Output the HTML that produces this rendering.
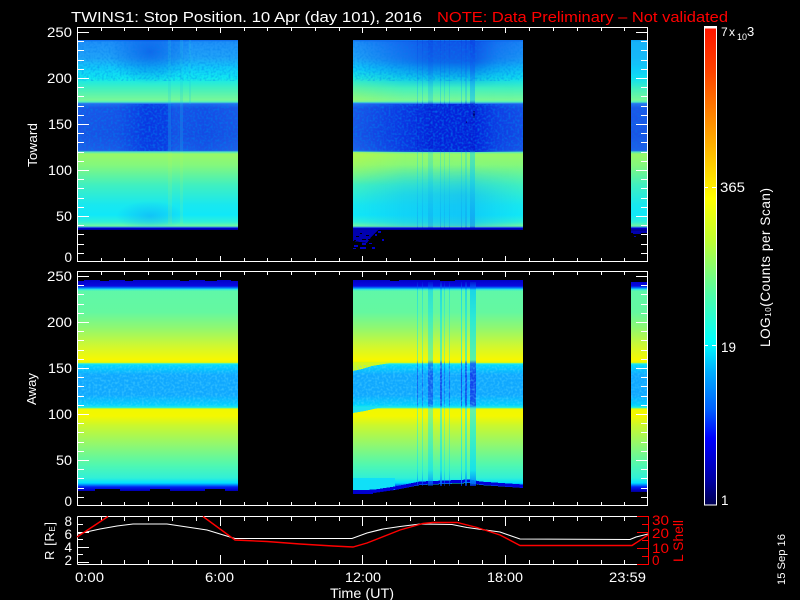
<!DOCTYPE html>
<html><head><meta charset="utf-8"><title>TWINS1 Stop Position</title>
<style>
html,body{margin:0;padding:0;background:#000;width:800px;height:600px;overflow:hidden}
svg{display:block}
text{font-family:"Liberation Sans",sans-serif;fill:#fff}
</style></head><body>
<svg width="800" height="600" viewBox="0 0 800 600" xmlns="http://www.w3.org/2000/svg">
<defs>
<linearGradient id="p1" gradientUnits="userSpaceOnUse" x1="0" y1="0" x2="0" y2="1000">
<stop offset=".040" stop-color="#0c68ec"/><stop offset=".042" stop-color="#2090f8"/><stop offset=".058" stop-color="#20a4f8"/><stop offset=".068" stop-color="#10ccfa"/><stop offset=".078" stop-color="#10e8f0"/><stop offset=".088" stop-color="#40f0c0"/><stop offset=".100" stop-color="#78f898"/><stop offset=".102" stop-color="#50f0c0"/><stop offset=".1035" stop-color="#2878f0"/><stop offset=".108" stop-color="#1c58e8"/><stop offset=".135" stop-color="#1a54e4"/><stop offset=".1505" stop-color="#2060e8"/><stop offset=".152" stop-color="#50e8c0"/><stop offset=".154" stop-color="#98f868"/><stop offset=".165" stop-color="#84f87c"/><stop offset=".185" stop-color="#40f0c0"/><stop offset=".205" stop-color="#18e8f0"/><stop offset=".215" stop-color="#10e8f8"/><stop offset=".222" stop-color="#30f0d8"/><stop offset=".226" stop-color="#70f8a0"/><stop offset=".2275" stop-color="#2060f0"/><stop offset=".228" stop-color="#0000d0"/><stop offset=".230" stop-color="#000090"/>
</linearGradient>
<linearGradient id="p1s" gradientUnits="userSpaceOnUse" x1="0" y1="0" x2="0" y2="1000">
<stop offset=".040" stop-color="#0838e0"/><stop offset=".070" stop-color="#1060f0"/><stop offset=".085" stop-color="#10a0f8"/><stop offset=".100" stop-color="#10c0f8"/><stop offset=".104" stop-color="#0818d0"/><stop offset=".150" stop-color="#0818d0"/><stop offset=".153" stop-color="#20d8e0"/><stop offset=".180" stop-color="#10c8f0"/><stop offset=".226" stop-color="#1088f0"/><stop offset=".228" stop-color="#0000d0"/>
</linearGradient>
<linearGradient id="p2" gradientUnits="userSpaceOnUse" x1="0" y1="0" x2="0" y2="1000">
<stop offset=".280" stop-color="#0000c8"/><stop offset=".286" stop-color="#0808e0"/><stop offset=".288" stop-color="#0080ff"/><stop offset=".2895" stop-color="#30e8e0"/><stop offset=".291" stop-color="#60f8a8"/><stop offset=".312" stop-color="#64f8a0"/><stop offset=".328" stop-color="#90f870"/><stop offset=".346" stop-color="#d0f830"/><stop offset=".360" stop-color="#f8f800"/><stop offset=".3625" stop-color="#e8f800"/><stop offset=".3635" stop-color="#40f0d0"/><stop offset=".365" stop-color="#00d8ff"/><stop offset=".375" stop-color="#10a8ff"/><stop offset=".395" stop-color="#10a8ff"/><stop offset=".405" stop-color="#00d0ff"/><stop offset=".4075" stop-color="#20f0e0"/><stop offset=".409" stop-color="#f0f800"/><stop offset=".416" stop-color="#f4f800"/><stop offset=".426" stop-color="#c8f830"/><stop offset=".445" stop-color="#90f870"/><stop offset=".465" stop-color="#50f8b0"/><stop offset=".478" stop-color="#30f0d8"/><stop offset=".483" stop-color="#00e0ff"/><stop offset=".485" stop-color="#0080ff"/><stop offset=".487" stop-color="#0020f0"/><stop offset=".490" stop-color="#0000c8"/><stop offset=".492" stop-color="#000090"/>
</linearGradient>
<linearGradient id="p2s" gradientUnits="userSpaceOnUse" x1="0" y1="0" x2="0" y2="1000">
<stop offset=".280" stop-color="#0000c0"/><stop offset=".288" stop-color="#0060ff"/><stop offset=".290" stop-color="#10d0f0"/><stop offset=".320" stop-color="#20e8e0"/><stop offset=".360" stop-color="#40f0c0"/><stop offset=".3635" stop-color="#1060f8"/><stop offset=".375" stop-color="#1030e8"/><stop offset=".405" stop-color="#1040e8"/><stop offset=".4075" stop-color="#20d0f0"/><stop offset=".409" stop-color="#50f0c0"/><stop offset=".430" stop-color="#30f0d0"/><stop offset=".470" stop-color="#10e0f0"/><stop offset=".483" stop-color="#0080ff"/><stop offset=".487" stop-color="#0000d0"/><stop offset=".492" stop-color="#000090"/>
</linearGradient>
<linearGradient id="h1" gradientUnits="userSpaceOnUse" x1="78" y1="0" x2="238" y2="0">
<stop offset="0" stop-color="#0030e0" stop-opacity="0"/><stop offset=".25" stop-color="#0030e0" stop-opacity=".15"/><stop offset=".42" stop-color="#0028e0" stop-opacity=".65"/><stop offset=".55" stop-color="#0028e0" stop-opacity=".6"/><stop offset=".6" stop-color="#0030e0" stop-opacity=".1"/><stop offset=".8" stop-color="#0030e0" stop-opacity=".25"/><stop offset="1" stop-color="#0030e0" stop-opacity="0"/>
</linearGradient>
<linearGradient id="h2" gradientUnits="userSpaceOnUse" x1="353" y1="0" x2="523" y2="0">
<stop offset="0" stop-color="#0020e0" stop-opacity="0"/><stop offset=".25" stop-color="#0020e0" stop-opacity=".5"/><stop offset=".45" stop-color="#0018d8" stop-opacity=".8"/><stop offset=".72" stop-color="#0018d8" stop-opacity=".85"/><stop offset=".85" stop-color="#0020e0" stop-opacity=".45"/><stop offset="1" stop-color="#0020e0" stop-opacity=".2"/>
</linearGradient>
<linearGradient id="hy" gradientUnits="userSpaceOnUse" x1="353" y1="0" x2="523" y2="0">
<stop offset="0" stop-color="#c0f840" stop-opacity=".65"/><stop offset=".3" stop-color="#c0f840" stop-opacity=".05"/><stop offset="1" stop-color="#c0f840" stop-opacity="0"/>
</linearGradient>
<linearGradient id="hc" gradientUnits="userSpaceOnUse" x1="353" y1="0" x2="523" y2="0">
<stop offset="0" stop-color="#10c0f8" stop-opacity="0"/><stop offset=".3" stop-color="#10c0f8" stop-opacity=".5"/><stop offset=".65" stop-color="#10b0f8" stop-opacity=".6"/><stop offset="1" stop-color="#10c0f8" stop-opacity="0"/>
</linearGradient>
<radialGradient id="blobD"><stop offset="0" stop-color="#0040e0" stop-opacity=".55"/><stop offset="1" stop-color="#0040e0" stop-opacity="0"/></radialGradient>
<radialGradient id="blobL"><stop offset="0" stop-color="#10a0f8" stop-opacity=".5"/><stop offset="1" stop-color="#10a0f8" stop-opacity="0"/></radialGradient>
<linearGradient id="fa" gradientUnits="userSpaceOnUse" x1="0" y1="0" x2="0" y2="1000"><stop offset=".041" stop-color="#fff"/><stop offset=".062" stop-color="#fff"/><stop offset=".088" stop-color="#000"/></linearGradient>
<linearGradient id="fb" gradientUnits="userSpaceOnUse" x1="0" y1="0" x2="0" y2="1000"><stop offset=".165" stop-color="#000"/><stop offset=".195" stop-color="#fff"/><stop offset=".226" stop-color="#fff"/></linearGradient>
<linearGradient id="fc" gradientUnits="userSpaceOnUse" x1="0" y1="0" x2="0" y2="1000"><stop offset=".152" stop-color="#fff"/><stop offset=".185" stop-color="#000"/></linearGradient>
<linearGradient id="fd" gradientUnits="userSpaceOnUse" x1="0" y1="0" x2="0" y2="1000"><stop offset=".070" stop-color="#000"/><stop offset=".098" stop-color="#fff"/></linearGradient>
<mask id="ma" maskUnits="userSpaceOnUse" x="0" y="0" width="800" height="600"><rect width="800" height="600" fill="url(#fa)"/></mask>
<mask id="mb" maskUnits="userSpaceOnUse" x="0" y="0" width="800" height="600"><rect width="800" height="600" fill="url(#fb)"/></mask>
<mask id="mc" maskUnits="userSpaceOnUse" x="0" y="0" width="800" height="600"><rect width="800" height="600" fill="url(#fc)"/></mask>
<mask id="md" maskUnits="userSpaceOnUse" x="0" y="0" width="800" height="600"><rect width="800" height="600" fill="url(#fd)"/></mask>
<clipPath id="c1"><rect x="78" y="40" width="160" height="188"/></clipPath>
<linearGradient id="cb" x1="0" y1="0" x2="0" y2="1">
<stop offset="0" stop-color="#ff1400"/><stop offset=".09" stop-color="#ff4000"/><stop offset=".18" stop-color="#ff8000"/><stop offset=".27" stop-color="#ffc000"/><stop offset=".36" stop-color="#ffff00"/><stop offset=".445" stop-color="#c0ff30"/><stop offset=".56" stop-color="#50ffa8"/><stop offset=".66" stop-color="#00ffff"/><stop offset=".72" stop-color="#00b0ff"/><stop offset=".80" stop-color="#0060ff"/><stop offset=".86" stop-color="#0000ff"/><stop offset=".95" stop-color="#0000a0"/><stop offset="1" stop-color="#000050"/>
</linearGradient>
<filter id="n" x="0" y="0" width="100%" height="100%"><feTurbulence type="fractalNoise" baseFrequency=".45" numOctaves="1" seed="4"/><feColorMatrix values="0 0 0 0 0  0 0 0 0 .2  0 0 0 0 .85  2.6 0 0 0 -1.1"/></filter>
<filter id="m" x="0" y="0" width="100%" height="100%"><feTurbulence type="fractalNoise" baseFrequency=".45" numOctaves="1" seed="9"/><feColorMatrix values="0 0 0 0 .1  0 0 0 0 .7  0 0 0 0 1  2.6 0 0 0 -1.1"/></filter>
<path id="xs1" d="M101 0v3M124 0v3M148 0v3M172 0v3M196 0v3M244 0v3M267 0v3M291 0v3M315 0v3M339 0v3M386 0v3M410 0v3M434 0v3M458 0v3M482 0v3M529 0v3M553 0v3M577 0v3M601 0v3M624 0v3M220 0v5M362 0v5M505 0v5"/>
<path id="xs3" d="M101 0v4M124 0v4M148 0v4M172 0v4M196 0v4M244 0v4M267 0v4M291 0v4M315 0v4M339 0v4M386 0v4M410 0v4M434 0v4M458 0v4M482 0v4M529 0v4M553 0v4M577 0v4M601 0v4M624 0v4M220 0v9M362 0v9M505 0v9"/>
<path id="ys" d="M77 32.5h12M77 78.5h12M77 124.5h12M77 170.5h12M77 216.5h12M77 41.5h7M77 50.5h7M77 60.5h7M77 69.5h7M77 87.5h7M77 96.5h7M77 106.5h7M77 115.5h7M77 133.5h7M77 142.5h7M77 152.5h7M77 161.5h7M77 179.5h7M77 188.5h7M77 198.5h7M77 207.5h7M77 225.5h7M77 234.5h7M77 244.5h7M77 253.5h7"/>
</defs>

<rect width="800" height="600" fill="#000"/>

<!-- Panel 1 data -->
<g shape-rendering="crispEdges">
<rect x="78" y="40" width="160" height="190" fill="url(#p1)"/>
<rect x="353" y="40" width="170" height="190" fill="url(#p1)"/>
<rect x="631" y="40" width="17" height="191" fill="url(#p1)"/>
<g mask="url(#ma)"><rect x="631" y="40" width="17" height="50" fill="#10c8f8" opacity=".6"/></g>
<!-- blobs -->
<g clip-path="url(#c1)">
<ellipse cx="150" cy="52" rx="42" ry="32" fill="url(#blobD)"/>
<ellipse cx="150" cy="216" rx="34" ry="15" fill="url(#blobL)"/>
</g>
<rect x="78" y="104" width="160" height="47" fill="url(#h1)"/>
<g mask="url(#ma)"><rect x="353" y="41" width="170" height="50" fill="url(#h2)" opacity=".6"/></g>
<rect x="353" y="104" width="170" height="48" fill="url(#h2)"/>
<g mask="url(#mb)"><rect x="353" y="160" width="170" height="66" fill="url(#hc)"/></g>
<g mask="url(#mc)"><rect x="353" y="152" width="170" height="34" fill="url(#hy)"/></g>
<g mask="url(#md)"><rect x="353" y="70" width="170" height="32" fill="url(#hy)" opacity=".5"/></g>
<!-- lighter stripes block 1 -->
<g fill="#20c8e8" opacity=".22"><rect x="168" y="40" width="3" height="64"/><rect x="180" y="40" width="3" height="64"/><rect x="189" y="40" width="2" height="64"/><rect x="168" y="104" width="3" height="47"/><rect x="180" y="104" width="3" height="47"/></g>
<g fill="#c0f850" opacity=".12"><rect x="168" y="152" width="4" height="72"/><rect x="180" y="152" width="3" height="72"/></g>
<!-- dark stripes block 2 -->
<g fill="url(#p1s)"><rect x="417" y="40" width="1" height="188" opacity=".35"/><rect x="422" y="40" width="1" height="188" opacity=".3"/><rect x="428" y="40" width="5" height="188" opacity=".3"/><rect x="440" y="40" width="1" height="188" opacity=".35"/><rect x="444" y="40" width="1" height="188" opacity=".3"/><rect x="449" y="40" width="1" height="188" opacity=".3"/><rect x="461" y="40" width="1" height="188" opacity=".35"/><rect x="465" y="40" width="2" height="188" opacity=".35"/><rect x="470" y="40" width="5" height="188" opacity=".55"/></g>
<rect x="473" y="111" width="2" height="7" fill="#000080"/>
<rect x="466" y="121" width="1" height="2" fill="#000080"/>
<!-- panel 1 bottom speckle -->
<polygon points="353,229 379,229 372,236 367,243 353,241" fill="#0000b0"/>
<g fill="#0000c8"><rect x="378" y="231" width="3" height="2"/><rect x="375" y="234" width="2" height="2"/><rect x="382" y="239" width="2" height="2"/><rect x="362" y="243" width="4" height="2"/><rect x="354" y="245" width="4" height="2"/><rect x="360" y="247" width="6" height="2"/><rect x="372" y="247" width="3" height="2"/><rect x="369" y="243" width="3" height="1"/><rect x="353" y="248" width="3" height="1"/></g>
<g fill="#000"><rect x="356" y="236" width="3" height="1"/><rect x="362" y="239" width="4" height="1"/><rect x="366" y="235" width="3" height="1"/><rect x="354" y="240" width="2" height="1"/><rect x="368" y="239" width="3" height="1"/><rect x="360" y="233" width="2" height="1"/></g>
<g fill="#0000b0"><rect x="631" y="231" width="17" height="2"/><rect x="633" y="233" width="8" height="1"/><rect x="634" y="236" width="2" height="1"/></g>
<!-- noise -->
<rect x="78" y="41" width="160" height="40" filter="url(#n)" opacity=".45"/>
<rect x="78" y="104" width="160" height="47" filter="url(#n)" opacity=".7"/>
<rect x="353" y="41" width="170" height="40" filter="url(#n)" opacity=".45"/>
<rect x="353" y="104" width="170" height="47" filter="url(#n)" opacity=".7"/>
<rect x="631" y="104" width="17" height="47" filter="url(#n)" opacity=".5"/>

<!-- Panel 2 data -->
<rect x="78" y="280" width="160" height="211" fill="url(#p2)"/>
<polygon points="353,280 523,280 523,488 480,485 470,483 420,485 395,490 375,493 353,494" fill="url(#p2)"/>
<rect x="631" y="282" width="17" height="210" fill="url(#p2)"/>
<!-- block 2 left band lag -->
<polygon points="353,363 353,371 362,369 372,366 390,363" fill="#d0f820"/>
<polygon points="353,407 353,413 365,411 378,408 390,407" fill="#20e0f0"/>
<rect x="353" y="478" width="42" height="12" fill="#10e0f8"/>
<polyline points="353,492 375,491 395,488 420,483 470,481 480,483 523,486" fill="none" stroke="#0000d8" stroke-width="3"/>
<rect x="353" y="491" width="20" height="3" fill="#0000d0"/>
<!-- irregular top and bottom edges -->
<g fill="#000"><rect x="78" y="280" width="6" height="1"/><rect x="100" y="280" width="9" height="1"/><rect x="125" y="280" width="8" height="1"/><rect x="180" y="280" width="9" height="1"/><rect x="205" y="280" width="12" height="1"/><rect x="231" y="280" width="7" height="1"/><rect x="95" y="489" width="25" height="2"/><rect x="150" y="489" width="20" height="2"/><rect x="205" y="489" width="20" height="2"/><rect x="390" y="280" width="9" height="1"/><rect x="440" y="280" width="15" height="1"/></g>
<!-- stripes block 2 -->
<g fill="url(#p2s)"><rect x="417" y="282" width="1" height="204" opacity=".6"/><rect x="422" y="282" width="1" height="204" opacity=".5"/><rect x="428" y="282" width="5" height="204" opacity=".6"/><rect x="440" y="282" width="2" height="204" opacity=".75"/><rect x="444" y="282" width="1" height="204" opacity=".5"/><rect x="449" y="282" width="1" height="204" opacity=".5"/><rect x="461" y="282" width="1" height="204" opacity=".8"/><rect x="465" y="282" width="2" height="204" opacity=".75"/><rect x="470" y="282" width="6" height="204" opacity=".85"/></g>
<rect x="78" y="365" width="160" height="41" filter="url(#m)" opacity=".5"/>
<rect x="353" y="365" width="170" height="41" filter="url(#m)" opacity=".5"/>
<rect x="631" y="365" width="17" height="41" filter="url(#m)" opacity=".4"/>
</g>

<!-- Axes -->
<g fill="none" stroke="#fff" stroke-width="1" shape-rendering="crispEdges">
<rect x="77.5" y="27.5" width="570" height="234"/>
<rect x="77.5" y="271.5" width="570" height="234"/>
<path d="M77.5 516.5H637M77.5 564.5H648M77.5 516.5V564.5"/>
<use href="#xs1" transform="translate(.5,28)"/>
<use href="#xs1" transform="translate(.5,261) scale(1,-1)"/>
<use href="#xs1" transform="translate(.5,272)"/>
<use href="#xs1" transform="translate(.5,505) scale(1,-1)"/>
<use href="#xs3" transform="translate(.5,517)"/>
<use href="#xs3" transform="translate(.5,564) scale(1,-1)"/>
<use href="#ys"/>
<use href="#ys" transform="translate(725,0) scale(-1,1)"/>
<use href="#ys" transform="translate(0,244)"/>
<use href="#ys" transform="translate(725,244) scale(-1,1)"/>
<path d="M77 532.5h12M77 547.5h12M77 562.5h12M77 524.5h6M77 539.5h6M77 554.5h6"/>
</g>
<g fill="none" stroke="#f00" stroke-width="1" shape-rendering="crispEdges">
<path d="M648.5 516V565M637 516.5h11M637 532.5h11M637 548.5h11M637 564.5h11M642 524.5h6M642 540.5h6M642 556.5h6"/>
</g>

<!-- Curves -->
<polyline fill="none" stroke="#fff" stroke-width="1.1" points="77,534 100,529 117,526 133,524 167,524 187,527 207,530 230,537 235,538.5 352,538.5 367,533 383,529 400,526.5 420,524 452,524.5 467,527.5 500,532 520,539 630,539.5 636,537 648,534"/>
<polyline fill="none" stroke="#f00" stroke-width="1.4" points="77,537 108,516.5"/>
<polyline fill="none" stroke="#f00" stroke-width="1.4" points="203,516.5 235,540 267,541.5 300,544 333,546 353,547 367,543 400,530 423,523.5 433,522.5 457,522.5 477,527.5 500,535 520,545.5 632,545.5 648,535"/>

<!-- Colour bar -->
<rect x="704.5" y="26.5" width="12" height="478.5" fill="url(#cb)" stroke="#fff" stroke-width="1" shape-rendering="crispEdges"/>
<rect x="704.5" y="26.5" width="12" height="2" fill="#fff" shape-rendering="crispEdges"/>
<g fill="#fff" shape-rendering="crispEdges"><rect x="705" y="187" width="3" height="1"/><rect x="712" y="187" width="4" height="1"/><rect x="705" y="345" width="3" height="1"/><rect x="712" y="345" width="4" height="1"/></g>

<!-- Titles -->
<text x="71" y="22" font-size="15" textLength="351" lengthAdjust="spacingAndGlyphs">TWINS1: Stop Position. 10 Apr (day 101), 2016</text>
<text x="437" y="22" font-size="15" textLength="291" lengthAdjust="spacingAndGlyphs" style="fill:#f00">NOTE: Data Preliminary – Not validated</text>

<!-- Y labels -->
<g font-size="13.5" text-anchor="end">
<text x="72" y="37" textLength="25" lengthAdjust="spacingAndGlyphs">250</text><text x="72" y="83" textLength="25" lengthAdjust="spacingAndGlyphs">200</text><text x="72" y="129" textLength="24" lengthAdjust="spacingAndGlyphs">150</text><text x="72" y="175" textLength="24" lengthAdjust="spacingAndGlyphs">100</text><text x="72" y="221" textLength="16" lengthAdjust="spacingAndGlyphs">50</text><text x="72" y="262">0</text>
<text x="72" y="281" textLength="25" lengthAdjust="spacingAndGlyphs">250</text><text x="72" y="327" textLength="25" lengthAdjust="spacingAndGlyphs">200</text><text x="72" y="373" textLength="24" lengthAdjust="spacingAndGlyphs">150</text><text x="72" y="419" textLength="24" lengthAdjust="spacingAndGlyphs">100</text><text x="72" y="465" textLength="16" lengthAdjust="spacingAndGlyphs">50</text><text x="72" y="506">0</text>
<text x="72" y="526">8</text><text x="72" y="539">6</text><text x="72" y="552">4</text><text x="72" y="565">2</text>
</g>
<text transform="translate(37,167) rotate(-90)" font-size="13" textLength="44" lengthAdjust="spacingAndGlyphs">Toward</text>
<text transform="translate(36,405) rotate(-90)" font-size="13" textLength="32" lengthAdjust="spacingAndGlyphs">Away</text>
<text transform="translate(54,560) rotate(-90)" font-size="13" textLength="38" lengthAdjust="spacing">R [R<tspan font-size="8" dy="1">E</tspan><tspan dy="-1">]</tspan></text>

<!-- Right red labels -->
<g font-size="13.5">
<text x="652" y="525" style="fill:#f00" textLength="17" lengthAdjust="spacingAndGlyphs">30</text>
<text x="652" y="538" style="fill:#f00" textLength="17" lengthAdjust="spacingAndGlyphs">20</text>
<text x="652" y="553" style="fill:#f00" textLength="17" lengthAdjust="spacingAndGlyphs">10</text>
<text x="652" y="565" style="fill:#f00">0</text>
<text transform="translate(683,562) rotate(-90)" style="fill:#f00" textLength="42" lengthAdjust="spacingAndGlyphs">L Shell</text>
</g>

<!-- X labels -->
<g font-size="13.5">
<text x="75" y="582" textLength="29" lengthAdjust="spacingAndGlyphs">0:00</text>
<text x="205" y="582" textLength="29" lengthAdjust="spacingAndGlyphs">6:00</text>
<text x="345" y="582" textLength="36" lengthAdjust="spacingAndGlyphs">12:00</text>
<text x="487" y="582" textLength="36" lengthAdjust="spacingAndGlyphs">18:00</text>
<text x="609" y="582" textLength="37" lengthAdjust="spacingAndGlyphs">23:59</text>
<text x="330" y="598" textLength="64" lengthAdjust="spacingAndGlyphs">Time (UT)</text>
</g>

<!-- Colour-bar labels -->
<g font-size="13.5">
<text x="721" y="36" font-size="12">7</text><text x="729" y="36" font-size="12">x</text><text x="737" y="40" font-size="9">10</text><text x="747" y="36" font-size="13">3</text>
<text x="720" y="192" textLength="25" lengthAdjust="spacingAndGlyphs">365</text>
<text x="721" y="352" textLength="15" lengthAdjust="spacingAndGlyphs">19</text>
<text x="721" y="505">1</text>
<text transform="translate(770,347) rotate(-90)" textLength="159" lengthAdjust="spacing">LOG<tspan font-size="8" dy="1">10</tspan><tspan dy="-1">(Counts per Scan)</tspan></text>
</g>
<text transform="translate(785,585) rotate(-90)" font-size="11" textLength="51" lengthAdjust="spacingAndGlyphs">15 Sep 16</text>
</svg>
</body></html>
